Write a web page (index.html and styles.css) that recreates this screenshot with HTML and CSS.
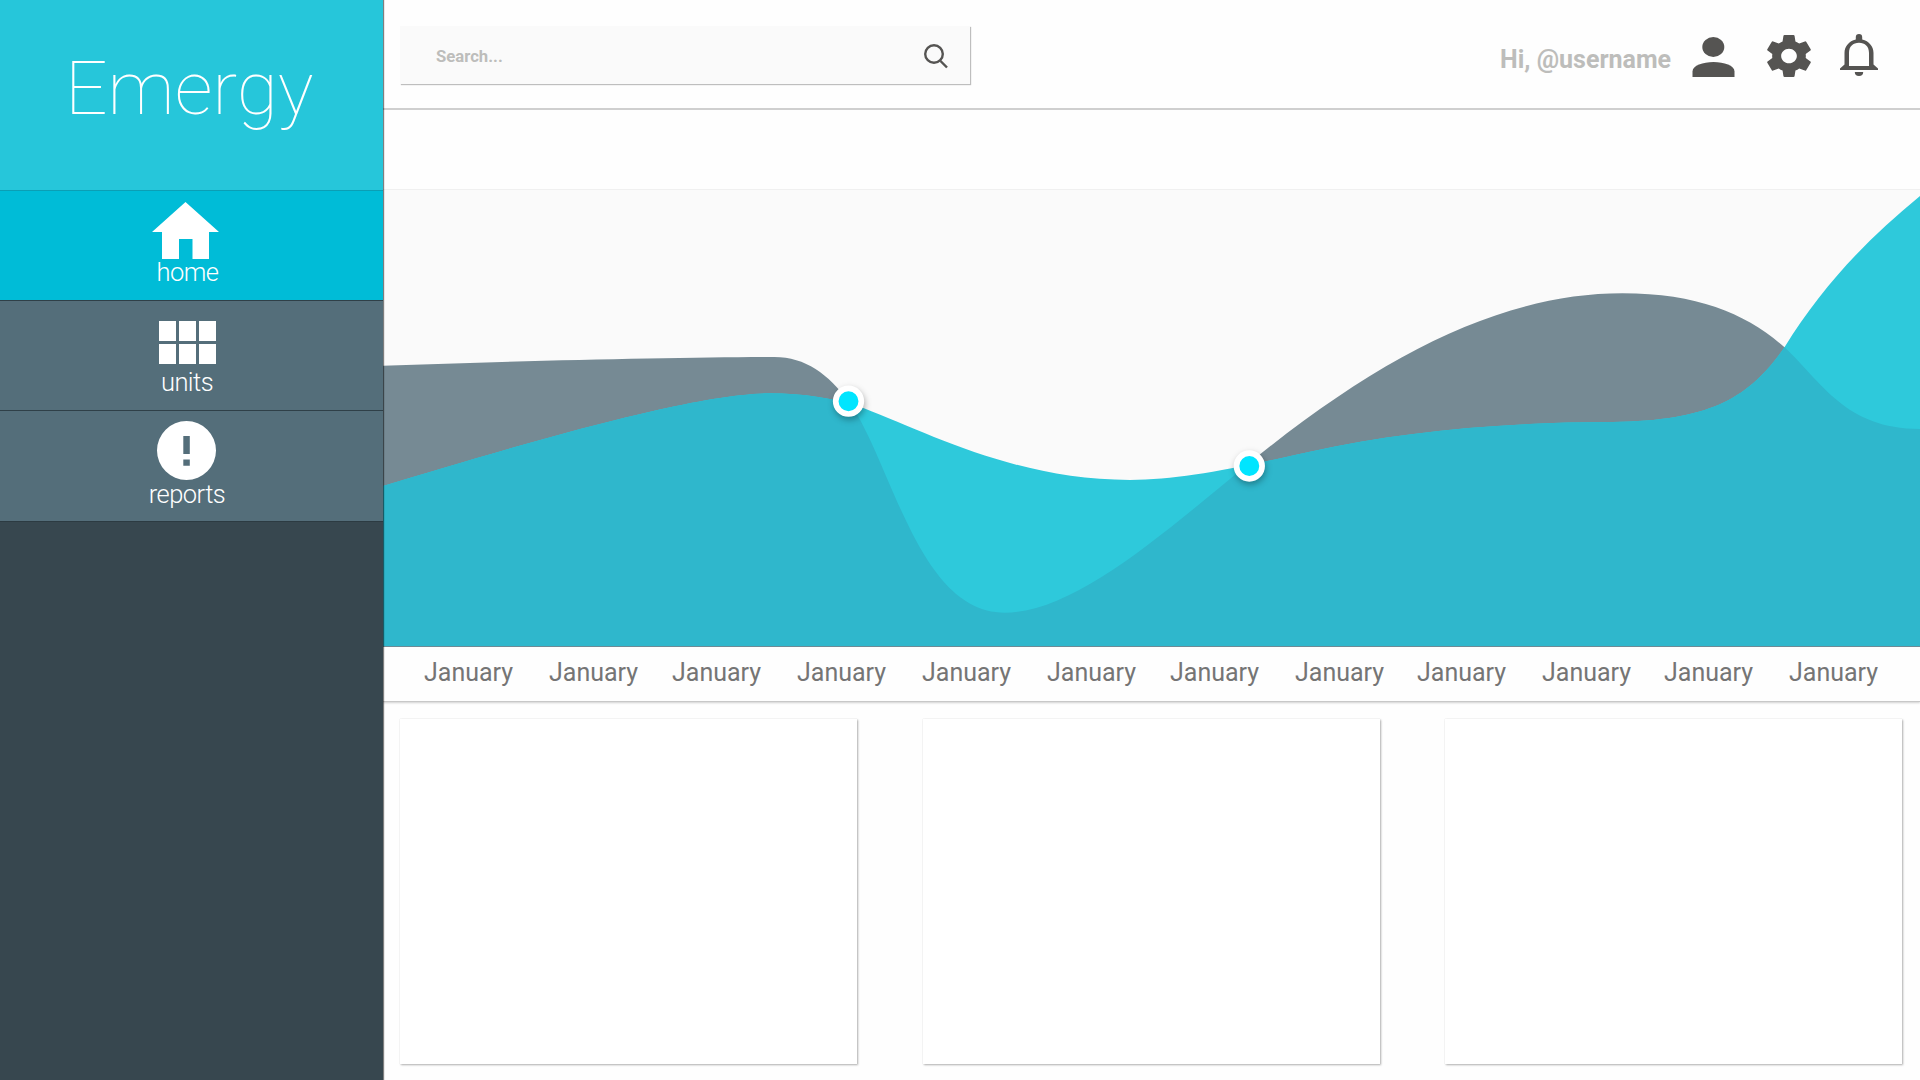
FILE: index.html
```html
<!DOCTYPE html>
<html lang="en">
<head>
<meta charset="utf-8">
<title>Emergy</title>
<link rel="stylesheet" href="styles.css">
</head>
<body>
<div class="app">
  <aside class="sidebar">
    <div class="brand">Emergy</div>
    <nav class="menu">
      <a class="item active">
        <svg class="ico-home" width="67" height="58" viewBox="0 0 67 58"><path d="M33.500 0 67 30H57V57H40.500V37H27V57H10V30H0z"/></svg>
        <span class="label home">home</span>
      </a>
      <a class="item">
        <svg class="ico-units" width="57" height="43" viewBox="0 0 57 43"><path d="M0 0h17v20H0zM20 0h17v20H20zM40 0h17v20H40zM0 23h17v20H0zM20 23h17v20H20zM40 23h17v20H40z"/></svg>
        <span class="label">units</span>
      </a>
      <a class="item last">
        <svg class="ico-reports" width="59" height="59" viewBox="0 0 59 59"><path fill-rule="evenodd" d="M29.500 0a29.500 29.500 0 1 1 0 59a29.500 29.500 0 1 1 0-59zM26.300 15v18h6.500V15zM26.300 38.500v6.200h6.500v-6.200z"/></svg>
        <span class="label">reports</span>
      </a>
    </nav>
  </aside>
  <main class="main">
    <header class="topbar">
      <div class="search">
        <span>Search...</span>
        <svg width="24" height="25" viewBox="0 0 24 25" fill="none" stroke="#555452" stroke-width="2.400"><circle cx="10" cy="10" r="8.800"/><path d="M16.500 17 23 23.500"/></svg>
      </div>
      <div class="user">
        <span class="hello">Hi, @username</span>
        <svg class="ico-user" width="43" height="40" viewBox="0 0 43 40"><ellipse cx="21.300" cy="10" rx="11" ry="10"/><path d="M.500 40V34.500C.500 28.500 11 25 21.500 25S42.500 28.500 42.500 34.500V40z"/></svg>
        <svg class="ico-gear" width="44" height="42" viewBox="2.200 2 19.600 20" preserveAspectRatio="none"><path d="M19.430 12.980c.04-.32.07-.64.07-.98s-.03-.66-.07-.98l2.110-1.650c.19-.15.24-.42.12-.64l-2-3.460c-.12-.22-.39-.3-.61-.22l-2.490 1c-.52-.4-1.080-.73-1.690-.98l-.38-2.650C14.460 2.180 14.250 2 14 2h-4c-.25 0-.46.18-.49.420l-.38 2.650c-.61.250-1.170.590-1.690.980l-2.490-1c-.23-.09-.49 0-.61.220l-2 3.460c-.13.220-.07.490.12.640l2.110 1.650c-.04.320-.07.650-.07.980s.03.660.07.980l-2.110 1.650c-.19.150-.24.420-.12.640l2 3.460c.12.220.39.300.61.220l2.490-1c.52.400 1.080.730 1.690.980l.38 2.650c.03.240.24.420.49.420h4c.25 0 .46-.18.49-.42l.38-2.650c.61-.25 1.170-.59 1.690-.98l2.490 1c.23.090.49 0 .61-.22l2-3.460c.12-.22.07-.49-.12-.64l-2.110-1.650zM12 15.500c-1.930 0-3.500-1.570-3.500-3.500s1.570-3.500 3.500-3.500 3.500 1.570 3.500 3.500-1.570 3.500-3.500 3.500z"/></svg>
        <svg class="ico-bell" width="38" height="42" viewBox="0 0 38 42"><path fill-rule="evenodd" d="M15.800 5.500V3.200a3.200 3.200 0 0 1 6.400 0V5.500C29 7 33.500 12.500 33.500 19V30.500L38 34.500V36H0V34.500L4.500 30.500V19C4.500 12.500 9 7 15.800 5.500zM9 32H29V19C29 12.500 25 8.800 19 8.800S9 12.500 9 19z"/><path d="M14.800 38h8.400a4.200 4 0 0 1-8.400 0z"/></svg>
      </div>
    </header>
    <section class="chart">
      <svg width="1537" height="456" viewBox="383 190 1537 456">
        <defs>
          <path id="series-a" d="M383 365.700C520 361 680 357 773 357C805 356.500 828 374 848.600 401.300C892 462 918 612.700 1005 612.700C1075 612.700 1165 532 1249.300 463C1385 352 1505 293.300 1622.400 293.300C1700 293.300 1748 315 1784.500 347.300C1822 382 1845 429 1920 429V646H383z"/>
          <path id="series-b" d="M383 486C500 451 688 393.300 770 393.300C802 393.300 835 398 864 408.300C930 434 1018 480 1130 480C1180 480 1233 469 1310 451.700C1400 431.500 1500 422.300 1613 422C1712 421 1750 397 1784.500 347.300C1822 287 1865 241 1920 196V646H383z"/>
          <clipPath id="overlap"><use href="#series-b"/></clipPath>
        </defs>
        <use class="area-gray" href="#series-a"/>
        <use class="area-cyan" href="#series-b"/>
        <g clip-path="url(#overlap)"><use class="area-both" href="#series-a"/></g>
        <g class="points"><circle cx="848.500" cy="401.200" r="12.800"/><circle cx="1249.300" cy="466" r="12.800"/></g>
      </svg>
    </section>
    <div class="months"><span>January</span><span class="narrow">January</span><span>January</span><span>January</span><span>January</span><span class="narrow">January</span><span>January</span><span class="tight">January</span><span>January</span><span class="tight">January</span><span>January</span><span>January</span></div>
    <section class="cards"><div class="card"></div><div class="card"></div><div class="card"></div></section>
  </main>
</div>
</body>
</html>
```
FILE: styles.css
```css
* { box-sizing: border-box; }
body { margin: 0; font-family: Roboto, sans-serif; background: #fefefe; }
svg { display: block; flex: none; }
.app { display: flex; width: 1920px; height: 1080px; overflow: hidden; }

.sidebar {
  width: 383px; flex: none; background: #37474f;
  box-shadow: 1px 0 1px rgba(0, 0, 0, .5); position: relative; z-index: 1;
}
.brand {
  height: 190px; padding: 43px 0 0 65px; background: #26c6da;
  color: #fff; font-size: 74.800px; line-height: 91px; font-weight: 100; white-space: nowrap;
}
.item {
  display: flex; flex-direction: column; align-items: center; height: 110px;
  padding-right: 10px; background: #546e7a; color: #fff; fill: #fff;
  border-top: 1px solid #2f4048;
}
.item.active { background: #00bcd7; padding-right: 12px; border-top-color: #0a9fb5; }
.item.last { height: 112px; border-bottom: 1px solid #2c3b42; }
.label { padding-left: 1px; font-size: 25.500px; line-height: 30px; font-weight: 300; letter-spacing: -.55px; }
.label.home { padding-left: 4px; margin-top: -3px; }
.ico-home { margin: 11px 0 0; }
.ico-units { margin: 20px 0 3px 2px; }
.ico-reports { margin: 10px 0 -1px; }

.main { flex: 1; display: flex; flex-direction: column; }
.topbar {
  display: flex; justify-content: space-between; height: 110px; flex: none;
  padding: 26px 42px 0 17px; border-bottom: 2px solid #cfcfcf;
}
.search {
  display: flex; align-items: center; justify-content: space-between;
  width: 570px; height: 58px; padding: 2px 22px 0 36px; background: #fafafa;
  box-shadow: 1px 1px 1px rgba(0, 0, 0, .25); color: #bdbdbb; font-size: 16.700px; font-weight: 700;
}
.user { display: flex; align-items: flex-start; fill: #555452; }
.hello { width: 192px; padding-top: 19px; color: #bdbdbb; font-size: 25px; line-height: 30px; font-weight: 700; white-space: nowrap; }
.ico-user { margin-top: 11px; }
.ico-gear { margin: 9px 0 0 32px; }
.ico-bell { margin: 8px 0 0 29px; }

.chart { flex: none; height: 537px; padding-top: 79px; border-bottom: 1px solid #6f8d98; }
.chart svg { height: 457px; background: #fafafa; border-top: 1px solid #f0f0f0; }
.area-gray { fill: #768a94; }
.area-cyan { fill: #2ec9db; }
.area-both { fill: #2fb7cc; }
.points { fill: #00e5ff; stroke: #fff; stroke-width: 5.700px; filter: drop-shadow(1px 3px 3px rgba(0, 0, 0, .3)); }

.months {
  display: flex; flex: none; height: 55px; padding: 11px 0 0 41px;
  color: #757575; font-size: 25px; line-height: 30px; border-bottom: 1px solid #c8c8c8;
  box-shadow: 0 1px 2px rgba(0, 0, 0, .18);
}
.months span { width: 125px; flex: none; }
.months .narrow { width: 123px; }
.months .tight { width: 122px; }
.months span:last-child { width: 90px; }
.cards { display: flex; justify-content: space-between; padding: 17px 18px 0 17px; }
.card { width: 457px; height: 345px; background: #fff; box-shadow: 1px 1px 2px rgba(0, 0, 0, .3), 0 0 1px rgba(0, 0, 0, .15); }
```
